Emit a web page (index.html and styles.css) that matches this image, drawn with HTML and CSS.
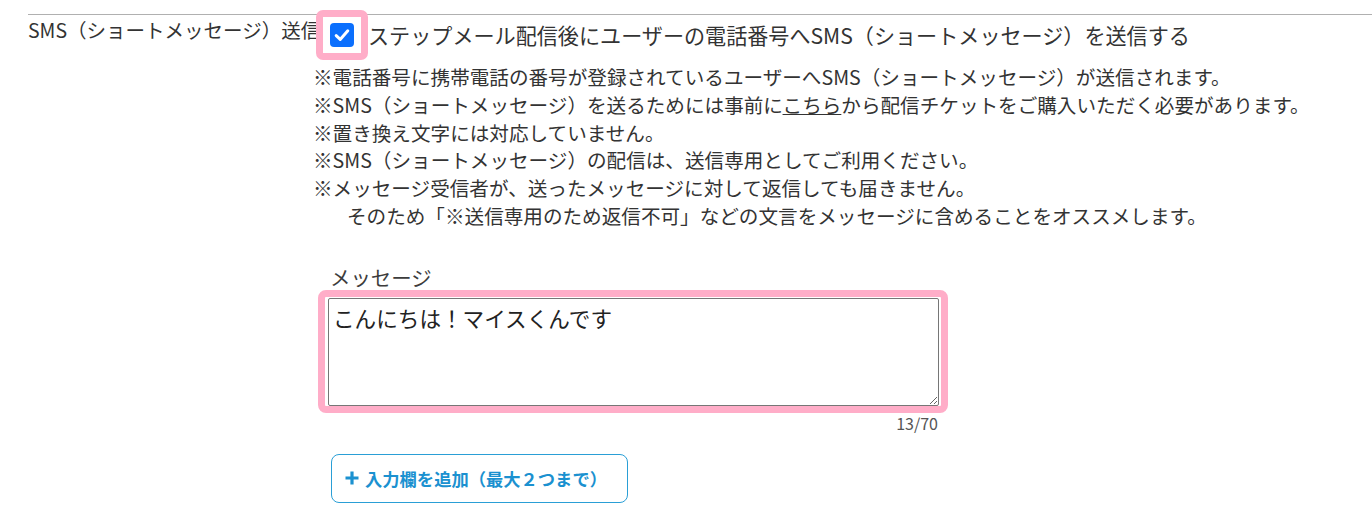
FILE: index.html
```html
<!DOCTYPE html>
<html lang="ja">
<head>
    <meta charset="utf-8">
    <link rel="stylesheet" href="styles.css">
</head>
<body>
    <div class="form-row">
        <div class="row-label">SMS（ショートメッセージ）送信</div>
        <div class="row-body">
            <label class="check-line">
                <span class="mark-box">
                    <span class="check-icon">
                        <svg width="24" height="24" viewBox="0 0 24 24">
                            <rect x="0" y="0" width="24" height="24" rx="4" fill="#0b6ffd"/>
                            <path d="M6.2 12.6 L10.2 16.4 L17.8 7.8" fill="none" stroke="#fff" stroke-width="3" stroke-linecap="round" stroke-linejoin="round"/>
                        </svg>
                    </span>
                </span>
                <span class="check-text">ステップメール配信後にユーザーの電話番号へSMS（ショートメッセージ）を送信する</span>
            </label>

            <ul class="notes">
                <li>※電話番号に携帯電話の番号が登録されているユーザーへSMS（ショートメッセージ）が送信されます。</li>
                <li>※SMS（ショートメッセージ）を送るためには事前に<a href="#">こちら</a>から配信チケットをご購入いただく必要があります。</li>
                <li>※置き換え文字には対応していません。</li>
                <li>※SMS（ショートメッセージ）の配信は、送信専用としてご利用ください。</li>
                <li>※メッセージ受信者が、送ったメッセージに対して返信しても届きません。</li>
                <li class="indent">そのため「※送信専用のため返信不可」などの文言をメッセージに含めることをオススメします。</li>
            </ul>

            <div class="field">
                <div class="field-label">メッセージ</div>
                <div class="mark-area">
                    <textarea>こんにちは！マイスくんです</textarea>
                </div>
                <div class="counter">13/70</div>
            </div>

            <button class="add-btn">
                <svg class="plus" width="14" height="14" viewBox="0 0 14 14">
                    <path d="M7 0.5 V13.5 M0.5 7 H13.5" stroke="#1b91d0" stroke-width="3.2"/>
                </svg>
                入力欄を追加（最大２つまで）
            </button>
        </div>
    </div>
</body>
</html>
```

FILE: styles.css
```css
body {
    margin: 0;
    font-family: "Noto Sans CJK JP", "Noto Sans", sans-serif;
    color: #333;
    background: #fff;
}
.form-row {
    display: flex;
    margin: 14px 0 0 28px;
    border-top: 1px solid #b0b0b0;
}
.row-label {
    width: 285px;
    flex-shrink: 0;
    white-space: nowrap;
    font-size: 19.5px;
    line-height: 30px;
}
.row-body {
    flex: 1;
}
.check-line {
    display: flex;
    align-items: center;
    margin-top: -5px;
}
.mark-box {
    position: relative;
    z-index: 1;
    display: flex;
    margin-left: 3px;
    padding: 6px 7px;
    border: 7px solid #ffadc8;
    border-radius: 7px;
    background: #fff;
}
.check-icon {
    display: flex;
    width: 24px;
    height: 24px;
}
.check-text {
    font-size: 21.1px;
    line-height: 30px;
    white-space: nowrap;
}
.notes {
    list-style: none;
    margin: 3px 0 0 0;
    padding: 0;
    font-size: 19.6px;
    line-height: 27.8px;
    white-space: nowrap;
}
.notes a {
    color: #333;
    text-decoration: underline;
}
.notes .indent {
    padding-left: 34px;
}
.field {
    margin: 34px 0 0 5px;
    width: 630px;
}
.field-label {
    padding-left: 12px;
    font-size: 20.4px;
    line-height: 26px;
    color: #3c3c3c;
}
.mark-area {
    box-sizing: border-box;
    width: 630px;
    padding: 1px 2px 0 3px;
    border: 7px solid #ffadc8;
    border-radius: 8px;
}
.mark-area textarea {
    display: block;
    box-sizing: border-box;
    width: 100%;
    height: 108px;
    margin: 0;
    padding: 4px 4px;
    border: 1px solid #767676;
    border-radius: 2px;
    font-family: "Noto Sans CJK JP", "Noto Sans", sans-serif;
    font-size: 21.6px;
    line-height: 30px;
    color: #222;
}
.counter {
    padding-right: 10px;
    text-align: right;
    font-size: 16px;
    line-height: 20px;
    color: #555;
}
.add-btn {
    display: flex;
    align-items: center;
    margin: 21px 0 0 18px;
    width: 297px;
    height: 49px;
    padding: 0 0 0 13px;
    border: 1px solid #2a9fd6;
    border-radius: 8px;
    background: #fff;
    color: #1b91d0;
    font-family: "Noto Sans CJK JP", "Noto Sans", sans-serif;
    font-size: 17.3px;
    font-weight: bold;
    cursor: pointer;
}
.plus {
    margin-right: 6px;
}
```
